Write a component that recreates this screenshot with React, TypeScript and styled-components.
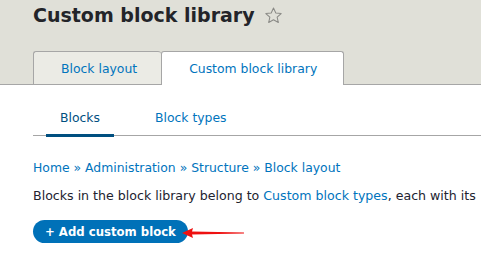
import styled, { createGlobalStyle } from 'styled-components'

const GlobalStyle = createGlobalStyle`
  body {
    margin: 0;
    background: #fff;
    font-family: "DejaVu Sans", Verdana, sans-serif;
    color: #222330;
    overflow: hidden;
  }
`

const Header = styled.header`
  background: #e0e0d8;
  border-bottom: 1px solid #a6a6a6;
  padding-left: 33px;
  height: 84px;
  display: flex;
  flex-direction: column;
`

const TitleRow = styled.div`
  display: flex;
  align-items: center;
  gap: 9px;
  height: 51px;
  padding-bottom: 24px;
  box-sizing: border-box;
  padding-top: 3px;
`

const Title = styled.h1`
  margin: 0;
  font-size: 19px;
  font-weight: bold;
  line-height: 24px;
  color: #232429;
`

const PrimaryTabs = styled.ul`
  display: flex;
  margin: 0;
  padding: 0;
  list-style: none;
  height: 33px;
`

const PrimaryTab = styled.li<{ $active?: boolean }>`
  box-sizing: border-box;
  height: ${(p) => (p.$active ? '34px' : '33px')};
  padding: 0 ${(p) => (p.$active ? '26px' : '24px')} 0 27px;
  display: flex;
  align-items: center;
  font-size: 12.4px;
  color: #0074bd;
  background: ${(p) => (p.$active ? '#fff' : '#ebebe5')};
  border: 1px solid #a6a6a6;
  border-bottom: none;
  border-right: ${(p) => (p.$active ? '1px solid #a6a6a6' : 'none')};
  border-radius: 3px 3px 0 0;
  position: relative;
  z-index: ${(p) => (p.$active ? 1 : 0)};
`

const Content = styled.main`
  padding-left: 33px;
  white-space: nowrap;
`

const SecondaryTabs = styled.ul`
  display: flex;
  gap: 27px;
  margin: 0;
  padding: 0 0 0 13px;
  list-style: none;
  border-bottom: 1px solid #a6a6a6;
`

const SecondaryTab = styled.li<{ $active?: boolean }>`
  position: relative;
  padding: 24px 14px 8px;
  line-height: 18px;
  font-size: 12.4px;
  color: ${(p) => (p.$active ? '#004f80' : '#0074bd')};

  &::after {
    content: '';
    display: ${(p) => (p.$active ? 'block' : 'none')};
    position: absolute;
    left: 0;
    right: 0;
    bottom: -2px;
    height: 3px;
    background: #004f80;
  }
`

const Breadcrumb = styled.div`
  margin-top: 23px;
  line-height: 18px;
  font-size: 12.4px;
  color: #0074bd;
`

const Description = styled.p`
  margin: 10px 0 0;
  line-height: 18px;
  font-size: 12.6px;
  color: #222330;
`

const Link = styled.span`
  color: #0074bd;
`

const ActionRow = styled.div`
  position: relative;
  margin-top: 15px;
  height: 23px;
`

const Button = styled.button`
  height: 23px;
  padding: 0 12px;
  border: none;
  border-radius: 12px;
  background: #0071b8;
  color: #fff;
  font-family: "DejaVu Sans", Verdana, sans-serif;
  font-weight: bold;
  font-size: 11.7px;
  cursor: pointer;
`

const Arrow = styled.svg`
  position: absolute;
  left: 149px;
  top: 7px;
`

const Star = () => (
  <svg width="19" height="19" viewBox="0 0 24 24" fill="none" stroke="#8a8a86" strokeWidth="1.3" strokeLinejoin="round">
    <path d="M12 2.5l2.9 6.3 6.8.7-5.1 4.6 1.5 6.8L12 17.4l-6.1 3.5 1.5-6.8-5.1-4.6 6.8-.7z" />
  </svg>
)

export default function App() {
  return (
    <>
      <GlobalStyle />
      <Header>
        <TitleRow>
          <Title>Custom block library</Title>
          <Star />
        </TitleRow>
        <PrimaryTabs>
          <PrimaryTab>Block layout</PrimaryTab>
          <PrimaryTab $active>Custom block library</PrimaryTab>
        </PrimaryTabs>
      </Header>
      <Content>
        <SecondaryTabs>
          <SecondaryTab $active>Blocks</SecondaryTab>
          <SecondaryTab>Block types</SecondaryTab>
        </SecondaryTabs>
        <Breadcrumb>Home » Administration » Structure » Block layout</Breadcrumb>
        <Description>
          Blocks in the block library belong to <Link>Custom block types</Link>, each with its
        </Description>
        <ActionRow>
          <Button>+ Add custom block</Button>
          <Arrow width="62" height="12" viewBox="0 0 62 12">
            <polygon points="0,6 11,1 10,4.5 62,5.6 62,6.4 10,7.5 11,11" fill="#ee1111" />
          </Arrow>
        </ActionRow>
      </Content>
    </>
  )
}
